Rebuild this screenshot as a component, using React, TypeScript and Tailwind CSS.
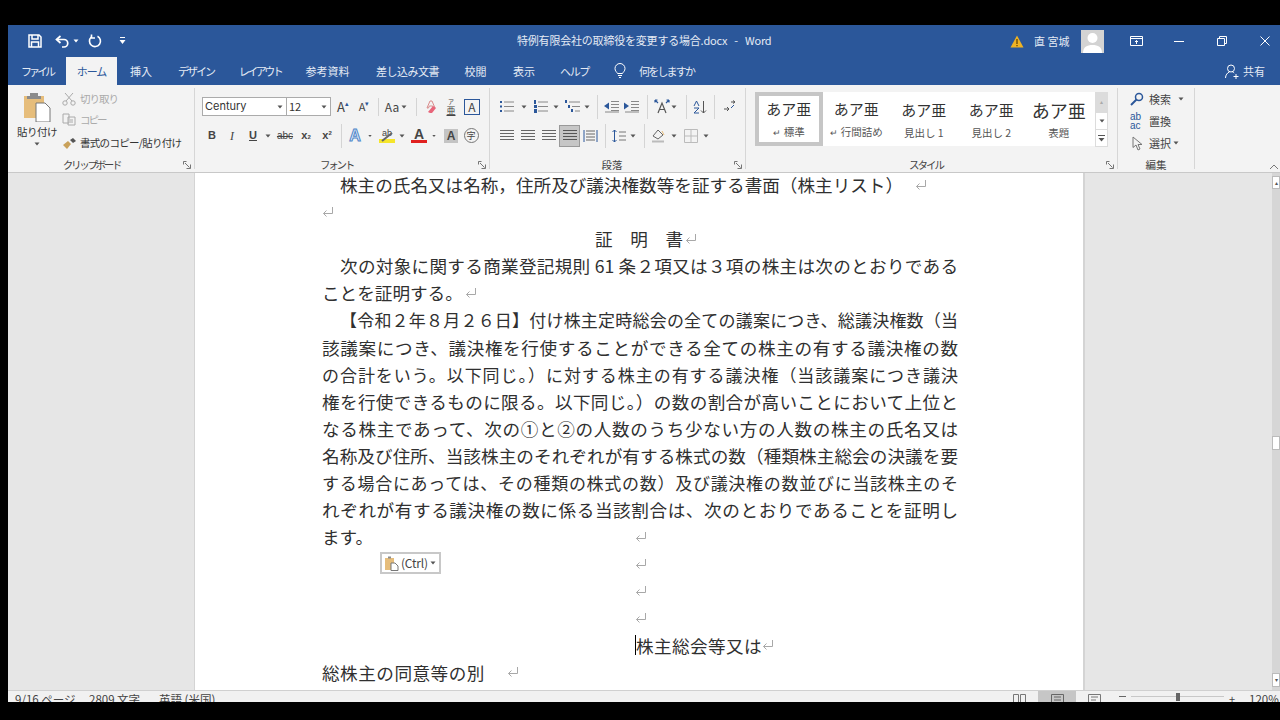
import type { ReactNode } from "react";

const cjk = { fontFamily: '"Noto Sans CJK JP", "Noto Sans", sans-serif' };

function Cell({ className, children }: { className: string; children?: ReactNode }) {
  return <div className={"flex shrink-0 items-center justify-center " + className}>{children}</div>;
}

function Caret({ className = "" }: { className?: string }) {
  return (
    <svg width="6" height="4" viewBox="0 0 6 4" className={className}>
      <path d="M0.5 0.5h5L3 3.5z" fill="#555" />
    </svg>
  );
}

function Sep() {
  return <div className="h-[24px] w-px shrink-0 bg-[#d4d4d4]" />;
}

function Launcher() {
  return (
    <svg width="8" height="8" viewBox="0 0 8 8" fill="none" stroke="#666" strokeWidth="0.9">
      <path d="M0.5 3.5v-3h3M2 2l4.5 4.5M3.5 7.5h4v-4" />
    </svg>
  );
}

function ReturnMark({ className = "" }: { className?: string }) {
  return (
    <svg width="12" height="12" viewBox="0 0 12 12" fill="none" stroke="#a8a8a8" strokeWidth="1" className={className}>
      <path d="M10.5 1v6.5H1.5M4.5 4.5l-3 3 3 3" />
    </svg>
  );
}

function Lines({ color = "#666" }: { color?: string }) {
  return (
    <svg width="14" height="13" viewBox="0 0 14 13" stroke={color} strokeWidth="1">
      <path d="M0 1.5h14M0 4.5h14M0 7.5h14M0 10.5h14" />
    </svg>
  );
}

function Group({ className, label, labelClass = "", launcher = true, children }: { className: string; label: string; labelClass?: string; launcher?: boolean; children: ReactNode }) {
  return (
    <div className={"flex h-[87px] shrink-0 " + className}>
      <div className="flex min-w-0 flex-1 flex-col">
        <div className="h-[73px] overflow-hidden">{children}</div>
        <div className="flex h-[14px] items-center pr-[3px]">
          <div className={"flex-1 whitespace-nowrap text-center text-[10.5px] leading-none text-[#444] " + labelClass}>{label}</div>
          {launcher && <Launcher />}
        </div>
      </div>
      <div className="my-[3px] w-px bg-[#d6d6d6]" />
    </div>
  );
}

function StyleItem({ glyph, label, selected, big, mark }: { glyph: string; label: string; selected?: boolean; big?: boolean; mark?: boolean }) {
  return (
    <div className={"flex h-[54px] w-[67.5px] shrink-0 flex-col items-center justify-center " + (selected ? "border-[4px] border-[#c6c6c6]" : "")}>
      <div className={"leading-[22px] text-[#333] " + (big ? "text-[18px]" : "text-[15px]")}>{glyph}</div>
      <div className="mt-[5px] whitespace-nowrap text-[10.5px] leading-[14px] text-[#555]">
        {mark && <span className="mr-[3px] text-[9px]">↵</span>}
        {label}
      </div>
    </div>
  );
}

const body: { text: string; indent?: boolean; tight?: boolean }[] = [
  { text: "【令和２年８月２６日】付け株主定時総会の全ての議案につき、総議決権数（当", indent: true, tight: true },
  { text: "該議案につき、議決権を行使することができる全ての株主の有する議決権の数" },
  { text: "の合計をいう。以下同じ。）に対する株主の有する議決権（当該議案につき議決", tight: true },
  { text: "権を行使できるものに限る。以下同じ。）の数の割合が高いことにおいて上位と" },
  { text: "なる株主であって、次の①と②の人数のうち少ない方の人数の株主の氏名又は" },
  { text: "名称及び住所、当該株主のそれぞれが有する株式の数（種類株主総会の決議を要" },
  { text: "する場合にあっては、その種類の株式の数）及び議決権の数並びに当該株主のそ", tight: true },
  { text: "れぞれが有する議決権の数に係る当該割合は、次のとおりであることを証明し" },
];

function TextLine({ text, indent, tight }: { text: string; indent?: boolean; tight?: boolean }) {
  return (
    <div className={"h-[27.1px] whitespace-nowrap text-justify leading-[27.1px] [text-align-last:justify] " + (indent ? "pl-[18px] " : "") + (tight ? "text-[17px]" : "")}>
      {text}
    </div>
  );
}

function EmptyMark() {
  return (
    <div className="flex h-[27.1px] items-center pl-[313px]">
      <ReturnMark />
    </div>
  );
}

export default function App() {
  return (
    <div className="flex h-[720px] w-[1280px] flex-col overflow-hidden bg-black pb-[18px] pl-[8px] pt-[25px]" style={cjk}>
      <div className="flex flex-1 flex-col overflow-hidden bg-[#e6e6e6]">
        {/* title bar */}
        <div className="flex h-[32px] shrink-0 items-center bg-[#2b579a] text-[#e4eaf4]">
          <div className="w-[17px]" />
          <Cell className="w-[20px]">
            <svg width="14" height="14" viewBox="0 0 14 14" fill="none" stroke="#fff" strokeWidth="1.5">
              <path d="M1 1h10l2 2v10H1z" />
              <path d="M4 1v4h6V1M3.5 13V8h7v5" />
            </svg>
          </Cell>
          <div className="w-[6px]" />
          <Cell className="w-[22px]">
            <svg width="15" height="13" viewBox="0 0 15 13" fill="none" stroke="#fff" strokeWidth="1.7">
              <path d="M5.5 1L1.5 4.5l4 3.500" />
              <path d="M1.5 4.500h7.500a3.700 3.700 0 0 1 0 7.500H7" />
            </svg>
          </Cell>
          <Cell className="w-[6px]"><Caret className="[&>path]:fill-white" /></Cell>
          <Cell className="w-[32px]">
            <svg width="14" height="14" viewBox="0 0 14 14" fill="none" stroke="#fff" strokeWidth="1.6">
              <path d="M9.500 2.200A5.500 5.500 0 1 1 3.300 3" />
              <path d="M3.500 0.500v3.500H7" />
            </svg>
          </Cell>
          <Cell className="w-[22px]">
            <svg width="7" height="8" viewBox="0 0 7 8" fill="#fff">
              <path d="M1 0h5v1H1zM0.500 3h6L3.500 7z" />
            </svg>
          </Cell>
          <div className="mb-[2px] ml-[384px] whitespace-nowrap text-[11px] leading-none tracking-[-0.2px]">特例有限会社の取締役を変更する場合.docx<span className="mx-[7px]">-</span>Word</div>
          <div className="ml-auto flex items-center pr-[4px]">
            <Cell className="w-[20px]">
              <svg width="14" height="13" viewBox="0 0 14 13">
                <path d="M7 0.500l6.500 12H0.500z" fill="#f0b323" />
                <path d="M6.400 4h1.200v5H6.400zM6.400 10h1.200v1.200H6.400z" fill="#5b3b00" />
              </svg>
            </Cell>
            <div className="ml-[7px] w-[37px] whitespace-nowrap text-[11px]">直 宮城</div>
            <div className="ml-[10px] flex h-[23px] w-[23px] items-end justify-center overflow-hidden bg-[#d3d3d3]">
              <svg width="23" height="23" viewBox="0 0 23 23" fill="#fff">
                <circle cx="11.500" cy="8" r="5" />
                <path d="M2 23c0-6 4-8 9.500-8S21 17 21 23z" />
              </svg>
            </div>
            <Cell className="w-[64px]">
              <svg width="13" height="10" viewBox="0 0 13 10" fill="none" stroke="#fff">
                <path d="M0.500 0.500h12v9H0.500zM0.500 2.500h12" />
                <path d="M6.500 8V4.500M5 6l1.500-1.500L8 6" />
              </svg>
            </Cell>
            <Cell className="w-[22px]"><div className="h-px w-[10px] bg-white" /></Cell>
            <Cell className="w-[64px]">
              <svg width="10" height="10" viewBox="0 0 10 10" fill="none" stroke="#fff">
                <path d="M0.500 2.500h7v7h-7zM2.500 2.500v-2h7v7h-2" />
              </svg>
            </Cell>
            <Cell className="w-[22px]">
              <svg width="10" height="10" viewBox="0 0 10 10" stroke="#fff">
                <path d="M0.500 0.500l9 9M9.500 0.500l-9 9" />
              </svg>
            </Cell>
          </div>
        </div>

        {/* tabs */}
        <div className="flex h-[28px] shrink-0 items-stretch whitespace-nowrap bg-[#2b579a] text-[11px] text-[#e4eaf4]">
          <Cell className="w-[58px] tracking-[-3px]">ファイル</Cell>
          <Cell className="w-[51px] bg-[#f3f3f3] tracking-[-1px] text-[#2b579a]">ホーム</Cell>
          <Cell className="w-[48px]">挿入</Cell>
          <Cell className="w-[62px] tracking-[-2px]">デザイン</Cell>
          <Cell className="w-[66px] tracking-[-2.500px]">レイアウト</Cell>
          <Cell className="w-[69px]">参考資料</Cell>
          <Cell className="w-[91px] tracking-[-0.500px]">差し込み文書</Cell>
          <Cell className="w-[45px]">校閲</Cell>
          <Cell className="w-[52px]">表示</Cell>
          <Cell className="w-[49px] tracking-[-1.300px]">ヘルプ</Cell>
          <Cell className="ml-[3px] w-[36px]">
            <svg width="12" height="16" viewBox="0 0 12 16" fill="none" stroke="#fff" strokeWidth="1">
              <path d="M3.500 10.500C2.800 9 1 8 1 5.500a5 5 0 0 1 10 0c0 2.500-1.800 3.500-2.500 5zM4 12.500h4M5 14.500h2" />
            </svg>
          </Cell>
          <div className="ml-[1px] flex items-center tracking-[-1.800px]">何をしますか</div>
          <div className="ml-auto flex items-center pr-[15px]">
            <svg width="14" height="15" viewBox="0 0 14 15" fill="none" stroke="#fff" strokeWidth="1" className="mr-[4px]">
              <circle cx="6" cy="4.500" r="3.500" />
              <path d="M0.500 14c0-3 2-5.500 4-6M7.500 8c.7.200 1.200.5 1.700 1M8.500 12.500h5M11 10v5" />
            </svg>
            共有
          </div>
        </div>

        {/* ribbon */}
        <div className="flex h-[88px] shrink-0 border-b border-[#c8c8c8] bg-[#f3f3f3] text-[#444]">
          <Group className="w-[187px]" label="クリップボード" labelClass="tracking-[-2.300px] pr-[8px]">
            <div className="flex pl-[9px] pt-[3px]">
              <div className="flex w-[40px] flex-col items-center pt-[4px]">
                <svg width="28" height="30" viewBox="0 0 28 30">
                  <path d="M1 4h20v22H1z" fill="#e6bd7b" />
                  <path d="M7 1h8v3h3v3H4V4h3z" fill="#8b8b8b" />
                  <path d="M13 11h9l5 5v14H13z" fill="#fff" stroke="#777" />
                </svg>
                <div className="mt-[2px] whitespace-nowrap text-[10.500px] leading-[16px] tracking-[-0.500px] text-[#333]">貼り付け</div>
                <Caret className="mt-[2px]" />
              </div>
              <div className="ml-[5px] flex flex-col text-[10.500px]">
                <div className="flex h-[21px] items-center text-[#aaa]">
                  <svg width="15" height="14" viewBox="0 0 15 14" fill="none" stroke="#aaa" className="mr-[3px]">
                    <circle cx="3" cy="11" r="2.200" />
                    <circle cx="11" cy="11" r="2.200" />
                    <path d="M4 9L11 1M10 9L3 1" />
                  </svg>
                  <span className="tracking-[-1px]">切り取り</span>
                </div>
                <div className="flex h-[21px] items-center text-[#aaa]">
                  <svg width="15" height="13" viewBox="0 0 15 13" fill="none" stroke="#aaa" className="mr-[3px]">
                    <path d="M1 1h6v9H1zM6 4h7v8H6z" />
                    <path d="M8 7h3M8 9h3" />
                  </svg>
                  <span className="tracking-[-2px]">コピー</span>
                </div>
                <div className="mt-[2px] flex h-[22px] items-center whitespace-nowrap text-[#333]">
                  <svg width="15" height="13" viewBox="0 0 15 13" className="mr-[3px]">
                    <path d="M1 8l5-4 3 3-4 5z" fill="#c9a15a" />
                    <path d="M8 3l3-2 3 3-3 2z" fill="#555" />
                  </svg>
                  <span className="tracking-[-0.700px]">書式のコピー/貼り付け</span>
                </div>
              </div>
            </div>
          </Group>

          <Group className="w-[295px]" label="フォント" labelClass="tracking-[-2.300px]">
            <div className="flex h-[31px] items-end pl-[7px] text-[11px]">
              <div className="flex h-[19px] w-[85px] items-center justify-between border border-[#ababab] bg-white pl-[2px] pr-[3px] font-['Inter'] text-[#333]">
                Century <Caret />
              </div>
              <div className="flex h-[19px] w-[44px] items-center justify-between border border-l-0 border-[#ababab] bg-white pl-[2px] pr-[3px] text-[#333]">
                12 <Caret />
              </div>
              <Cell className="h-[19px] w-[24px] text-[13px]">A<span className="mb-[6px] text-[7px] text-[#2b579a]">▴</span></Cell>
              <Cell className="h-[19px] w-[18px] text-[11px]">A<span className="mb-[6px] text-[7px] text-[#2b579a]">▾</span></Cell>
              <Cell className="h-[19px] w-[10px]"><div className="h-[18px] w-px bg-[#d4d4d4]" /></Cell>
              <Cell className="h-[19px] w-[18px] text-[12px]">Aa</Cell>
              <Cell className="h-[19px] w-[6px]"><Caret /></Cell>
              <Cell className="h-[19px] w-[18px]"><div className="h-[18px] w-px bg-[#d4d4d4]" /></Cell>
              <Cell className="h-[19px] w-[12px]">
                <svg width="14" height="14" viewBox="0 0 14 14" className="shrink-0">
                  <path d="M6 1h2l3 7H9.500l-.8-2H5.300l-.8 2H3z" fill="none" stroke="#d98b8b" />
                  <path d="M4 12l5-6 3 2-4 5H6z" fill="#e8657a" />
                </svg>
              </Cell>
              <Cell className="h-[19px] w-[28px]">
                <div className="flex flex-col items-center">
                  <span className="text-[6px] leading-[7px]">ア</span>
                  <span className="text-[9px] leading-[11px] underline">亜</span>
                </div>
              </Cell>
              <Cell className="h-[19px] w-[14px]">
                <div className="flex h-[16px] w-[16px] shrink-0 items-center justify-center border border-[#2b579a] text-[12px] leading-none">A</div>
              </Cell>
            </div>
            <div className="mt-[5px] flex h-[29px] items-center pl-[7px] text-[11px]">
              <Cell className="w-[20px] font-['Liberation_Sans'] font-bold">B</Cell>
              <Cell className="w-[20px] font-['Liberation_Serif'] text-[12px] italic">I</Cell>
              <Cell className="w-[22px] font-['Liberation_Sans'] font-bold underline">U</Cell>
              <Cell className="w-[8px]"><Caret /></Cell>
              <Cell className="w-[26px] font-['Liberation_Sans'] text-[10px] line-through">abc</Cell>
              <Cell className="w-[16px] font-['Liberation_Sans'] font-bold">x<sub className="text-[6px]">2</sub></Cell>
              <Cell className="w-[26px] font-['Liberation_Sans'] font-bold">x<sup className="text-[6px]">2</sup></Cell>
              <Cell className="w-[2px]"><Sep /></Cell>
              <Cell className="w-[26px] font-['Liberation_Sans'] text-[16px] font-bold text-[#e4eefa] [-webkit-text-stroke:1px_#4f86c9]">A</Cell>
              <Cell className="w-[4px]"><Caret /></Cell>
              <Cell className="ml-[4px] w-[22px]">
                <div className="relative flex w-[16px] flex-col items-center">
                  <span className="font-['Liberation_Sans'] text-[9px] leading-[9px]">ab</span>
                  <div className="mt-[1px] h-[4px] w-[16px] bg-[#f5e52b]" />
                  <svg width="16" height="14" viewBox="0 0 16 14" className="absolute left-0 top-0">
                    <path d="M3 12L13 4" stroke="#666" strokeWidth="2" />
                  </svg>
                </div>
              </Cell>
              <Cell className="w-[8px]"><Caret /></Cell>
              <Cell className="w-[26px]">
                <div className="flex flex-col items-center font-['Liberation_Sans'] text-[14px] font-bold leading-[12px]">
                  A<div className="h-[3px] w-[16px] bg-[#e0201f]" />
                </div>
              </Cell>
              <Cell className="w-[4px]"><Caret /></Cell>
              <Cell className="w-[30px]">
                <div className="flex h-[14px] w-[14px] items-center justify-center bg-[#c4c4c4] font-['Liberation_Sans'] text-[12px] font-bold">A</div>
              </Cell>
              <Cell className="w-[10px]">
                <div className="flex h-[15px] w-[15px] shrink-0 items-center justify-center rounded-full border border-[#777] text-[9px] leading-none">字</div>
              </Cell>
            </div>
          </Group>

          <Group className="w-[256px]" label="段落">
            <div className="flex h-[31px] items-end pl-[9px]">
              <Cell className="h-[19px] w-[16px]">
                <svg width="14" height="13" viewBox="0 0 14 13">
                  <path d="M4 2h10M4 6.500h10M4 11h10" stroke="#888" />
                  <path d="M0 1h2v2H0zM0 5.500h2v2H0zM0 10h2v2H0z" fill="#2b579a" />
                </svg>
              </Cell>
              <Cell className="h-[19px] w-[17px]"><Caret /></Cell>
              <Cell className="h-[19px] w-[17px]">
                <svg width="14" height="13" viewBox="0 0 14 13">
                  <path d="M4 2h10M4 6.500h10M4 11h10" stroke="#888" />
                  <path d="M0 0h2v4H0zM0 5h3v3H0zM0 9h3v4H0z" fill="#2b579a" />
                </svg>
              </Cell>
              <Cell className="h-[19px] w-[14px]"><Caret /></Cell>
              <Cell className="h-[19px] w-[18px]">
                <svg width="15" height="13" viewBox="0 0 15 13">
                  <path d="M4 2h11M7 6.500h8M10 11h5" stroke="#888" />
                  <path d="M0 0h2v3H0zM3 5h2v3H3zM6 9h2v3H6z" fill="#2b579a" />
                </svg>
              </Cell>
              <Cell className="h-[19px] w-[12px]"><Caret /></Cell>
              <Cell className="h-[19px] w-[8px]"><Sep /></Cell>
              <Cell className="h-[19px] w-[20px]">
                <svg width="15" height="13" viewBox="0 0 15 13">
                  <path d="M7 1.500h8M7 4.500h8M7 7.500h8M7 10.500h8M1 12h14" stroke="#888" />
                  <path d="M0 6l5-3.500v7z" fill="#2b579a" />
                </svg>
              </Cell>
              <Cell className="h-[19px] w-[21px]">
                <svg width="15" height="13" viewBox="0 0 15 13">
                  <path d="M7 1.500h8M7 4.500h8M7 7.500h8M7 10.500h8M1 12h14" stroke="#888" />
                  <path d="M5 6l-5-3.500v7z" fill="#2b579a" />
                </svg>
              </Cell>
              <Cell className="h-[19px] w-[10px]"><Sep /></Cell>
              <Cell className="h-[19px] w-[20px]">
                <svg width="16" height="15" viewBox="0 0 16 15" fill="none" stroke="#2b579a" strokeWidth="1.200">
                  <path d="M1 1l3 3M15 1l-3 3M1 1h2.500M1 1v2.500M15 1h-2.500M15 1v2.500" />
                  <path d="M4 14l4-10 4 10M5.500 10.500h5" stroke="#555" />
                </svg>
              </Cell>
              <Cell className="h-[19px] w-[4px]"><Caret className="shrink-0" /></Cell>
              <Cell className="h-[19px] w-[20px]"><Sep /></Cell>
              <Cell className="h-[19px] w-[8px]">
                <svg width="14" height="14" viewBox="0 0 14 14" fill="none" className="shrink-0">
                  <path d="M10.500 1v12M8 10.500l2.500 2.500 2.500-2.500" stroke="#555" />
                  <path d="M1 6l2.500-5L6 6M1 8h5L1 13h5" stroke="#2b579a" />
                </svg>
              </Cell>
              <Cell className="h-[19px] w-[20px]"><Sep /></Cell>
              <Cell className="h-[19px] w-[12px]">
                <svg width="12" height="13" viewBox="0 0 12 13" fill="none" stroke="#555">
                  <path d="M7 2h4M9 0.500l2 1.500-2 1.500M0 9h5M3 7l2 2-2 2" />
                  <path d="M10 5L7 8" stroke="#2b579a" />
                </svg>
              </Cell>
            </div>
            <div className="mt-[5px] flex h-[29px] items-center pl-[9px]">
              <Cell className="w-[16px]"><Lines /></Cell>
              <Cell className="w-[26px]"><Lines /></Cell>
              <Cell className="w-[16px]"><Lines /></Cell>
              <Cell className="ml-[2px] h-[22px] w-[21px] border border-[#999] bg-[#c6c6c6]"><Lines color="#555" /></Cell>
              <Cell className="w-[20px]">
                <svg width="15" height="14" viewBox="0 0 15 14" stroke="#666">
                  <path d="M1 1v12M14 1v12" stroke="#2b579a" />
                  <path d="M3 2h9M3 5h9M3 8h9M3 11h9" />
                </svg>
              </Cell>
              <Cell className="w-[10px]"><Sep /></Cell>
              <Cell className="w-[18px]">
                <svg width="14" height="14" viewBox="0 0 14 14" fill="none">
                  <path d="M2.500 1v12M0.500 3l2-2 2 2M0.500 11l2 2 2-2" stroke="#2b579a" />
                  <path d="M7 3h7M7 7h7M7 11h7" stroke="#777" />
                </svg>
              </Cell>
              <Cell className="w-[10px]"><Caret /></Cell>
              <Cell className="w-[12px]"><Sep /></Cell>
              <Cell className="w-[16px]">
                <svg width="16" height="15" viewBox="0 0 16 15" fill="none" stroke="#666" className="shrink-0">
                  <path d="M3 8l5-6 5 5-5 4z" />
                  <path d="M2 13.500h12" stroke="#bbb" strokeWidth="2" />
                  <path d="M12 3l2 4" stroke="#e6bd7b" />
                </svg>
              </Cell>
              <Cell className="w-[16px]"><Caret /></Cell>
              <Cell className="w-[18px]">
                <svg width="14" height="14" viewBox="0 0 14 14" fill="none" stroke="#bbb" className="shrink-0">
                  <path d="M0.500 0.500h13v13H0.500zM7 0.500v13M0.500 7h13" />
                </svg>
              </Cell>
              <Cell className="w-[12px]"><Caret /></Cell>
            </div>
          </Group>

          <Group className="w-[372px]" label="スタイル" labelClass="tracking-[-2px]">
            <div className="flex pl-[9px] pt-[7px]">
              <div className="flex h-[54px] w-[340px] bg-white">
                <StyleItem glyph="あア亜" label="標準" mark selected />
                <StyleItem glyph="あア亜" label="行間詰め" mark />
                <StyleItem glyph="あア亜" label="見出し 1" />
                <StyleItem glyph="あア亜" label="見出し 2" />
                <StyleItem glyph="あア亜" label="表題" big />
              </div>
              <div className="flex w-[13px] flex-col">
                <Cell className="h-[20px] bg-[#dcdcdc]"><span className="text-[6px] leading-none text-[#aaa]">▴</span></Cell>
                <Cell className="h-[18px] border border-[#dcdcdc] bg-white"><Caret /></Cell>
                <Cell className="h-[17px] border border-t-0 border-[#dcdcdc] bg-white">
                  <svg width="7" height="7" viewBox="0 0 7 7" fill="#555">
                    <path d="M0 0h7v1H0zM0.500 3h6L3.500 6.500z" />
                  </svg>
                </Cell>
              </div>
            </div>
          </Group>

          <Group className="w-[77px]" label="編集" labelClass="pl-[3px]" launcher={false}>
            <div className="flex flex-col pl-[12px] pt-[3px] text-[11px]">
              <div className="flex h-[22px] items-center">
                <svg width="14" height="14" viewBox="0 0 14 14" fill="none" className="mr-[5px]">
                  <circle cx="9" cy="5" r="3.500" stroke="#2b579a" strokeWidth="1.500" />
                  <path d="M6.500 7.500L1 13" stroke="#2b579a" strokeWidth="2" />
                </svg>
                検索
                <Caret className="ml-[7px]" />
              </div>
              <div className="flex h-[22px] items-center">
                <span className="mr-[3px] w-[16px] font-['Liberation_Sans'] text-[10px] leading-[9px] text-[#2b579a]">ab<br />ac</span>
                置換
              </div>
              <div className="flex h-[22px] items-center">
                <svg width="12" height="15" viewBox="0 0 12 15" fill="none" stroke="#777" className="ml-[2px] mr-[5px]">
                  <path d="M1 1v10.500l3-2.500 2 5 2-1-2-4.500h4z" />
                </svg>
                選択
                <Caret className="ml-[2px]" />
              </div>
            </div>
          </Group>

          <div className="flex flex-1 items-end justify-end pb-[2px] pr-[1px]">
            <svg width="10" height="6" viewBox="0 0 10 6" fill="none" stroke="#777">
              <path d="M1 5l4-4 4 4" />
            </svg>
          </div>
        </div>

        {/* document */}
        <div className="flex min-h-0 flex-1 overflow-hidden">
          <div className="w-[186px] shrink-0" />
          <div className="relative w-[891px] shrink-0 overflow-hidden border-l border-r-2 border-[#d4d4d4] bg-white pl-[127px] text-[17.600px] text-[#303030]">
            <div className="-mt-[2px] w-[636px]">
              <div className="flex h-[27.100px] items-center whitespace-nowrap pl-[18px] leading-[27.100px]">
                株主の氏名又は名称，住所及び議決権数等を証する書面（株主リスト）<ReturnMark className="ml-[12px]" />
              </div>
              <div className="flex h-[27.100px] items-center"><ReturnMark /></div>
              <div className="flex h-[27.100px] items-center whitespace-nowrap pl-[273px] leading-[27.100px]">
                証　明　書<ReturnMark className="ml-[2px]" />
              </div>
              <TextLine text="次の対象に関する商業登記規則 61 条２項又は３項の株主は次のとおりである" indent />
              <div className="flex h-[27.100px] items-center whitespace-nowrap leading-[27.100px]">
                ことを証明する。<ReturnMark className="ml-[2px]" />
              </div>
              {body.map((l) => <TextLine key={l.text} {...l} />)}
              <div className="flex h-[27.100px] items-center whitespace-nowrap leading-[27.100px]">
                <div className="w-[313px]">ます。</div>
                <ReturnMark />
              </div>
              <EmptyMark />
              <EmptyMark />
              <EmptyMark />
              <div className="flex h-[27.100px] items-center whitespace-nowrap pl-[313px] leading-[27.100px] tracking-[0.400px]">
                <div className="h-[20px] w-px bg-black" />
                株主総会等又は<ReturnMark />
              </div>
              <div className="flex h-[27.100px] items-center whitespace-nowrap leading-[27.100px] tracking-[0.500px]">
                総株主の同意等の別<ReturnMark className="ml-[22px]" />
              </div>
            </div>
            {/* paste options button */}
            <div className="absolute left-[185px] top-[379px] flex h-[22px] w-[61px] items-center border-2 border-[#c8c8c8] bg-white pl-[2px] text-[12px] text-[#444]">
              <svg width="15" height="15" viewBox="0 0 15 15" className="shrink-0">
                <path d="M1 2h9v12H1z" fill="#e6bd7b" />
                <path d="M4 0.500h3v2H4z" fill="#8b8b8b" />
                <path d="M7 7h4l3 3v4.500H7z" fill="#fff" stroke="#777" />
              </svg>
              <span className="ml-[2px] whitespace-nowrap tracking-[-0.200px]">(Ctrl)</span>
              <Caret className="ml-[2px] shrink-0" />
            </div>
          </div>
          <div className="flex-1" />
          <div className="flex w-[8px] shrink-0 flex-col bg-[#d6d6d6] py-[3px]">
            <div className="flex h-[13px] items-center justify-center border border-[#bbb] bg-white text-[6px] leading-none text-[#555]">▴</div>
            <div className="mt-[247px] h-[14px] border border-[#bbb] bg-white" />
            <div className="mt-auto flex h-[14px] items-center justify-center border border-[#bbb] bg-white text-[6px] leading-none text-[#555]">▾</div>
          </div>
        </div>

        {/* status bar, cut off by the black edge */}
        <div className="flex h-[12px] shrink-0 items-start overflow-hidden border-t border-[#d0d0d0] bg-[#f1f1f1] text-[11.500px] leading-[16px] text-[#444]">
          <div className="ml-[7px] w-[74px] whitespace-nowrap">9/16 ページ</div>
          <div className="w-[70px] whitespace-nowrap">2809 文字</div>
          <div className="whitespace-nowrap">英語 (米国)</div>
          <div className="ml-auto flex h-[12px] items-start">
            <Cell className="mt-[3px] w-[20px]">
              <svg width="13" height="12" viewBox="0 0 13 12" fill="none" stroke="#777">
                <path d="M0.500 0.500h5v11h-5zM7.500 0.500h5v11h-5z" />
              </svg>
            </Cell>
            <Cell className="ml-[9px] h-[12px] w-[38px] items-start bg-[#c6c6c6] pt-[3px]">
              <svg width="13" height="12" viewBox="0 0 13 12" fill="none" stroke="#666">
                <path d="M0.500 0.500h12v11h-12zM3 3h7M3 6h7" />
              </svg>
            </Cell>
            <Cell className="ml-[8px] mt-[3px] w-[20px]">
              <svg width="13" height="12" viewBox="0 0 13 12" fill="none" stroke="#777">
                <path d="M0.500 0.500h12v11h-12zM3 3h7M3 6h5" />
              </svg>
            </Cell>
            <Cell className="ml-[13px] mt-[5px] w-[10px]"><div className="h-px w-[7px] bg-[#666]" /></Cell>
            <div className="ml-[4px] mt-[5px] flex h-[1px] w-[93px] items-center justify-center bg-[#c8c8c8]">
              <div className="h-[8px] w-[4px] shrink-0 bg-[#666]" />
            </div>
            <Cell className="ml-[3px] mt-[3px] w-[10px] text-[11px] leading-none">+</Cell>
            <div className="ml-[12px] w-[31px] whitespace-nowrap">120%</div>
          </div>
        </div>
      </div>
    </div>
  );
}
